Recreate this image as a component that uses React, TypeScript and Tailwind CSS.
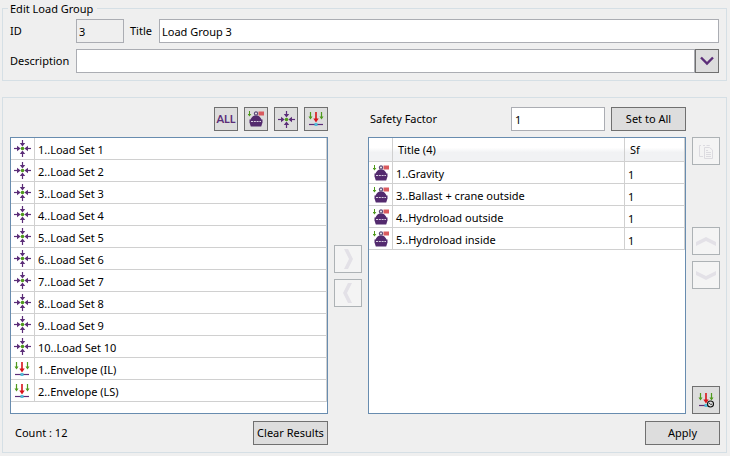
import type { ButtonHTMLAttributes, ReactNode } from "react";

const loadSets = Array.from({ length: 10 }, (_, i) => `${i + 1}..Load Set ${i + 1}`);
const envelopes = ["1..Envelope (IL)", "2..Envelope (LS)"];
const selected = ["1..Gravity", "3..Ballast + crane outside", "4..Hydroload outside", "5..Hydroload inside"];

function LoadSetIcon() {
    return (
        <svg width="17" height="17" viewBox="0 0 17 17" aria-hidden="true">
            {[0, 90, 180, 270].map((angle) => (
                <g key={angle} transform={`rotate(${angle} 8.5 8.5)`}>
                    <path d="M0 8.5H5" stroke="#5b2d78" strokeWidth="1.2" />
                    <path d="M3 5.8L6.6 8.5L3 11.2Z" fill="#5b2d78" />
                </g>
            ))}
            <circle cx="8.5" cy="8.5" r="1.8" fill="#4e9a1c" />
        </svg>
    );
}

function ShipIcon() {
    return (
        <svg width="16" height="16" viewBox="0 0 16 16" aria-hidden="true">
            <path d="M1.5 0V4" stroke="#4e9a1c" strokeWidth="1" />
            <path d="M-0.3 3H3.3L1.5 5.4Z" fill="#4e9a1c" />
            <path d="M10.5 0.5H16V4.5H10.5Z" fill="#d95b5f" />
            <path d="M6.5 4.5H9.5C12 5.5 13 7 13.5 9H2.5C3 7 4 5.5 6.5 4.5Z" fill="#532a6e" />
            <circle cx="8" cy="2.5" r="1.6" fill="#efefef" stroke="#5b4a78" strokeWidth="1.2" />
            <path d="M1.5 8.5H14.5V11.5L13.2 15.5H2.8L1.5 11.5Z" fill="#532a6e" />
            <path d="M3 10.5H13" stroke="#d8cfe0" strokeWidth="1" strokeDasharray="2 0.8" />
        </svg>
    );
}

function EnvelopeIcon({ clock = false }: { clock?: boolean }) {
    return (
        <svg width="16" height="16" viewBox="0 0 16 16" aria-hidden="true">
            <path d="M2.5 1V7M13.5 1V7" stroke="#4e9a1c" strokeWidth="1.2" />
            <path d="M0.5 5.5H4.5L2.5 8.5ZM11.5 5.5H15.5L13.5 8.5Z" fill="#4e9a1c" />
            <path d="M8 1V9" stroke="#d8121a" strokeWidth="1.6" />
            <path d="M5.3 7.5H10.7L8 11.5Z" fill="#d8121a" />
            <path d="M1 13.5H15" stroke="#5b2d78" strokeWidth="1.2" />
            <path d="M6.5 12H9.5V15H6.5Z" fill="#52bdd8" />
            {clock && (
                <>
                    <circle cx="12.5" cy="12" r="3" fill="#ddd" stroke="#111" strokeWidth="1.1" />
                    <path d="M10.8 10.8L12.5 12.3H14" fill="none" stroke="#111" strokeWidth="0.8" />
                </>
            )}
        </svg>
    );
}

function CopyIcon() {
    return (
        <svg width="16" height="16" viewBox="0 0 16 16" fill="none" stroke="#dcdbe0" aria-hidden="true">
            <path d="M5 13.5H1.5V2.5H3M5 2.5H7M8.5 2.5H11.5V3" />
            <path d="M6.5 4.5H11.5L14.5 7V15.5H6.5Z" />
            <path d="M8 7.5H10M8 9.5H13M8 11.5H13M8 13.5H13" />
        </svg>
    );
}

// Faded arrows of the disabled move buttons
function MoveIcon({ d }: { d: string }) {
    return (
        <svg width="22" height="22" viewBox="0 0 22 22" aria-hidden="true">
            <path d={d} fill="#e3e1e7" />
        </svg>
    );
}

function IconButton({ label, children, ...props }: { label: string; children: ReactNode } & ButtonHTMLAttributes<HTMLButtonElement>) {
    return (
        <button
            type="button"
            aria-label={label}
            className="flex size-7 items-center justify-center border border-[#707070] bg-[#dddddd] disabled:border-[#adb2b5] disabled:bg-[#f4f4f4]"
            {...props}
        >
            {children}
        </button>
    );
}

function ToolButton({ label, children }: { label: string; children: ReactNode }) {
    return (
        <button type="button" aria-label={label} className="flex size-6 items-center justify-center border border-[#707070] bg-[#dddddd]">
            {children}
        </button>
    );
}

function TextButton({ children }: { children: ReactNode }) {
    return (
        <button type="button" className="h-6 w-[75px] shrink-0 border border-[#707070] bg-[#dddddd] whitespace-nowrap">
            {children}
        </button>
    );
}

function SourceRow({ icon, title }: { icon: ReactNode; title: string }) {
    return (
        <tr className="h-[22px]">
            <td className="w-6 border-r border-b border-[#d0d0d0] p-0 pl-[3px]">{icon}</td>
            <td className="border-r border-b border-[#d0d0d0] p-0 pt-0.5 pl-[3px]">{title}</td>
        </tr>
    );
}

export default function App() {
    return (
        <main className="flex min-h-screen flex-col gap-4 bg-[#efefef] pr-[3px] pb-[3px] pl-0.5 font-['Noto_Sans','Open_Sans',sans-serif] text-[11px] leading-4 text-black">
            <fieldset className="flex flex-col gap-1.5 border border-[#d5dfe5] pt-[3px] pr-[7px] pb-[7px] pl-[7px]">
                <legend className="-ml-0.5 px-0.5 pt-0.5 pr-1 leading-[14px]">Edit Load Group</legend>
                <div className="flex items-center">
                    <label htmlFor="group-id" className="w-[66px]">ID</label>
                    <input id="group-id" readOnly defaultValue="3" className="h-6 w-12 border border-[#abadb3] bg-transparent px-0.5" />
                    <label htmlFor="group-title" className="w-[35px] pl-1.5">Title</label>
                    <input id="group-title" defaultValue="Load Group 3" className="h-6 min-w-0 flex-1 border border-[#abadb3] bg-white px-0.5" />
                </div>
                <div className="flex items-center">
                    <label htmlFor="group-description" className="w-[66px]">Description</label>
                    <input id="group-description" className="h-6 min-w-0 flex-1 border border-[#abadb3] bg-white px-0.5" />
                    <ToolButton label="Expand description">
                        <svg width="14" height="10" viewBox="0 0 14 10" fill="none" stroke="#5b2d78" strokeWidth="2.4" aria-hidden="true">
                            <path d="M1 1.5L7 7.5L13 1.5" />
                        </svg>
                    </ToolButton>
                </div>
            </fieldset>

            <section className="flex flex-1 gap-1.5 border border-[#d5dfe5] pt-[9px] pr-1.5 pb-[7px] pl-[7px]">
                <div className="flex min-w-0 flex-1 flex-col">
                    <div className="mb-1.5 flex justify-end gap-1.5">
                        <ToolButton label="Show all">
                            <span className="font-['Lato',sans-serif] text-[11px] font-bold text-[#5b2d78]">ALL</span>
                        </ToolButton>
                        <ToolButton label="Show loads"><ShipIcon /></ToolButton>
                        <ToolButton label="Show load sets"><LoadSetIcon /></ToolButton>
                        <ToolButton label="Show envelopes"><EnvelopeIcon /></ToolButton>
                    </div>
                    <div className="flex-1 border border-[#688caf] bg-white pb-2.5">
                        <table className="w-full border-separate border-spacing-0">
                            <tbody>
                                {loadSets.map((title) => <SourceRow key={title} icon={<LoadSetIcon />} title={title} />)}
                                {envelopes.map((title) => <SourceRow key={title} icon={<EnvelopeIcon />} title={title} />)}
                            </tbody>
                        </table>
                    </div>
                    <div className="mt-[7px] flex items-center justify-between pl-[5px]">
                        <span>Count : 12</span>
                        <TextButton>Clear Results</TextButton>
                    </div>
                </div>

                <div className="flex flex-col justify-center gap-1.5">
                    <IconButton label="Add" disabled><MoveIcon d="M7 1H11L16 11L11 21H7L12 11Z" /></IconButton>
                    <IconButton label="Remove" disabled><MoveIcon d="M15 1H11L6 11L11 21H15L10 11Z" /></IconButton>
                </div>

                <div className="flex min-w-0 flex-1 flex-col">
                    <div className="mb-1.5 flex items-center gap-1.5">
                        <label htmlFor="safety-factor" className="flex-1 pl-0.5">Safety Factor</label>
                        <input id="safety-factor" defaultValue="1" className="h-6 w-[94px] border border-[#abadb3] bg-white px-[3px]" />
                        <TextButton>Set to All</TextButton>
                    </div>
                    <div className="flex-1 border border-[#688caf] bg-white">
                        <table className="w-full border-separate border-spacing-0">
                            <thead>
                                <tr className="h-6 bg-linear-to-b from-white from-40% to-[#f1f2f4] to-60% text-left [&>th]:border-r [&>th]:border-b [&>th]:border-[#d0d0d0] [&>th]:font-normal">
                                    <th className="w-6 p-0" aria-label="Type" />
                                    <th className="p-0 pl-[5px]">Title (4)</th>
                                    <th className="w-[60px] p-0 pl-[5px]">Sf</th>
                                </tr>
                            </thead>
                            <tbody>
                                {selected.map((title) => (
                                    <tr key={title} className="h-[22px] [&>td]:border-r [&>td]:border-b [&>td]:border-[#d0d0d0]">
                                        <td className="p-0 pl-1"><ShipIcon /></td>
                                        <td className="p-0 pt-0.5 pl-[3px]">{title}</td>
                                        <td className="p-0 pt-1 pl-[3px]">1</td>
                                    </tr>
                                ))}
                            </tbody>
                        </table>
                    </div>
                    <div className="h-[31px]" />
                </div>

                <div className="flex w-7 flex-col items-end pt-[30px]">
                    <IconButton label="Copy" disabled><CopyIcon /></IconButton>
                    <div className="mt-[62px] flex flex-col gap-1.5">
                        <IconButton label="Move up" disabled><MoveIcon d="M1 12L11 7L21 12V16L11 11L1 16Z" /></IconButton>
                        <IconButton label="Move down" disabled><MoveIcon d="M1 7L11 12L21 7V11L11 16L1 11Z" /></IconButton>
                    </div>
                    <div className="mt-auto mb-[7px]">
                        <IconButton label="Schedule envelope"><EnvelopeIcon clock /></IconButton>
                    </div>
                    <TextButton>Apply</TextButton>
                </div>
            </section>
        </main>
    );
}
